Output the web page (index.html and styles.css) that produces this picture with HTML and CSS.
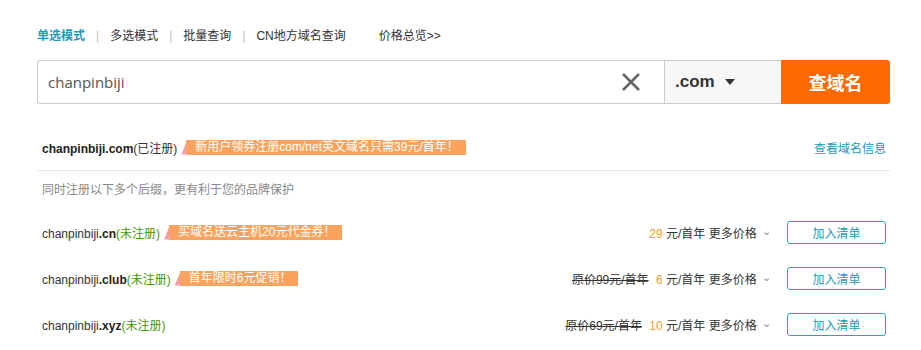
FILE: index.html
```html
<!DOCTYPE html>
<html lang="zh-CN">
<head>
    <meta charset="UTF-8">
    <title>域名查询</title>
    <link rel="stylesheet" href="styles.css">
</head>
<body>
    <div class="wrap">
        <div class="tabs">
            <a class="tab active">单选模式</a>
            <span class="sep">|</span>
            <a class="tab">多选模式</a>
            <span class="sep">|</span>
            <a class="tab">批量查询</a>
            <span class="sep">|</span>
            <a class="tab">CN地方域名查询</a>
            <a class="tab overview">价格总览&gt;&gt;</a>
        </div>

        <div class="search">
            <div class="search-input">
                <span class="query">chanpinbiji</span>
                <svg class="clear" width="22" height="22" viewBox="0 0 22 22">
                    <path d="M3 3 L19 19 M19 3 L3 19" stroke="#666" stroke-width="2.6" fill="none"/>
                </svg>
            </div>
            <div class="suffix">
                <span>.com</span>
                <svg width="10" height="6" viewBox="0 0 10 6"><path d="M0 0 H10 L5 6 Z" fill="#333"/></svg>
            </div>
            <button class="search-btn">查域名</button>
        </div>

        <div class="result main">
            <div class="left">
                <span class="name"><b>chanpinbiji.com</b>(已注册)</span>
                <span class="tag">新用户领券注册com/net英文域名只需39元/首年！</span>
            </div>
            <a class="info">查看域名信息</a>
        </div>

        <p class="tip">同时注册以下多个后缀，更有利于您的品牌保护</p>

        <div class="result">
            <div class="left">
                <span class="name">chanpinbiji<b>.cn</b><em>(未注册)</em></span>
                <span class="tag">买域名送云主机20元代金券！</span>
            </div>
            <div class="right">
                <span class="price"><i>29</i> 元/首年 更多价格 <span class="chev">&#8964;</span></span>
                <button class="add">加入清单</button>
            </div>
        </div>

        <div class="result">
            <div class="left">
                <span class="name">chanpinbiji<b>.club</b><em>(未注册)</em></span>
                <span class="tag">首年限时6元促销！</span>
            </div>
            <div class="right">
                <span class="price"><s>原价99元/首年</s> <i>6</i> 元/首年 更多价格 <span class="chev">&#8964;</span></span>
                <button class="add">加入清单</button>
            </div>
        </div>

        <div class="result">
            <div class="left">
                <span class="name">chanpinbiji<b>.xyz</b><em>(未注册)</em></span>
            </div>
            <div class="right">
                <span class="price"><s>原价69元/首年</s> <i>10</i> 元/首年 更多价格 <span class="chev">&#8964;</span></span>
                <button class="add">加入清单</button>
            </div>
        </div>
    </div>
</body>
</html>
```

FILE: styles.css
```css
/* Página */
body {
    margin: 0;
    background-color: #fff;
    font-family: "Liberation Sans", "Noto Sans CJK SC", sans-serif;
    font-size: 12px;
    color: #333;
    overflow: hidden;
}

.wrap {
    padding: 27px 31px 0 37px;
}

/* Pestañas */
.tabs {
    display: flex;
    align-items: center;
    height: 18px;
    line-height: 18px;
}

.tab {
    color: #333;
    cursor: pointer;
}

.tab.active {
    color: #1a9cb8;
    font-weight: bold;
}

.sep {
    color: #bbb;
    margin: 0 11px 0 11px;
}

.tab.overview {
    margin-left: 33px;
}

/* Buscador */
.search {
    display: flex;
    margin-top: 15px;
    height: 44px;
}

.search-input {
    flex: 1;
    display: flex;
    align-items: center;
    justify-content: space-between;
    border: 1px solid #ccc;
    border-right: none;
    border-radius: 3px 0 0 3px;
    padding: 0 22px 0 10px;
}

.query {
    font-family: "Open Sans", "Liberation Sans", sans-serif;
    font-size: 15px;
    color: #555;
}

.suffix {
    width: 90px;
    display: flex;
    align-items: center;
    gap: 10px;
    padding: 0 16px 0 10px;
    background-color: #f7f7f7;
    border: 1px solid #ccc;
    border-right: none;
    font-size: 17px;
    font-weight: bold;
    color: #333;
}

.search-btn {
    width: 109px;
    border: none;
    border-radius: 0 3px 3px 0;
    background-color: #ff6a00;
    color: #fff;
    font-family: "Noto Sans CJK SC", sans-serif;
    font-size: 18px;
    font-weight: bold;
    cursor: pointer;
}

/* Resultados */
.result {
    display: flex;
    align-items: center;
    justify-content: space-between;
    height: 46px;
    padding: 0 4px 0 5px;
}

.result.main {
    margin-top: 20px;
    border-bottom: 1px solid #e8e8e8;
}

.left {
    display: flex;
    align-items: center;
}

.name b {
    font-weight: bold;
    color: #222;
}

.name em {
    font-style: normal;
    color: #3d9900;
}

.tag {
    position: relative;
    margin-left: 9px;
    padding: 0 7px 0 9px;
    height: 15px;
    line-height: 15px;
    background-color: #f9a35e;
    color: #fff;
}

/* Esquina inclinada de la etiqueta */
.tag::before {
    content: "";
    position: absolute;
    left: -5px;
    top: 0;
    width: 6px;
    height: 15px;
    background: linear-gradient(#f9a35e, #f3a0b6);
    clip-path: polygon(100% 0, 100% 100%, 0 100%);
}

.info {
    color: #1a9cb8;
    font-size: 12px;
    cursor: pointer;
}

.tip {
    margin: 0;
    height: 38px;
    line-height: 38px;
    padding-left: 5px;
    color: #888;
}

.right {
    display: flex;
    align-items: center;
}

.price i {
    font-style: normal;
    color: #f0a030;
}

.price s {
    color: #333;
    margin-right: 4px;
}

.chev {
    display: inline-block;
    color: #888;
    font-size: 11px;
    margin-left: 2px;
    transform: translateY(-3px);
}

.add {
    margin-left: 16px;
    width: 99px;
    height: 23px;
    background-color: #fff;
    border: 1px solid #2aa3b5;
    border-radius: 3px;
    color: #1a9cb8;
    font-family: "Noto Sans CJK SC", sans-serif;
    font-size: 12px;
    cursor: pointer;
}
```
